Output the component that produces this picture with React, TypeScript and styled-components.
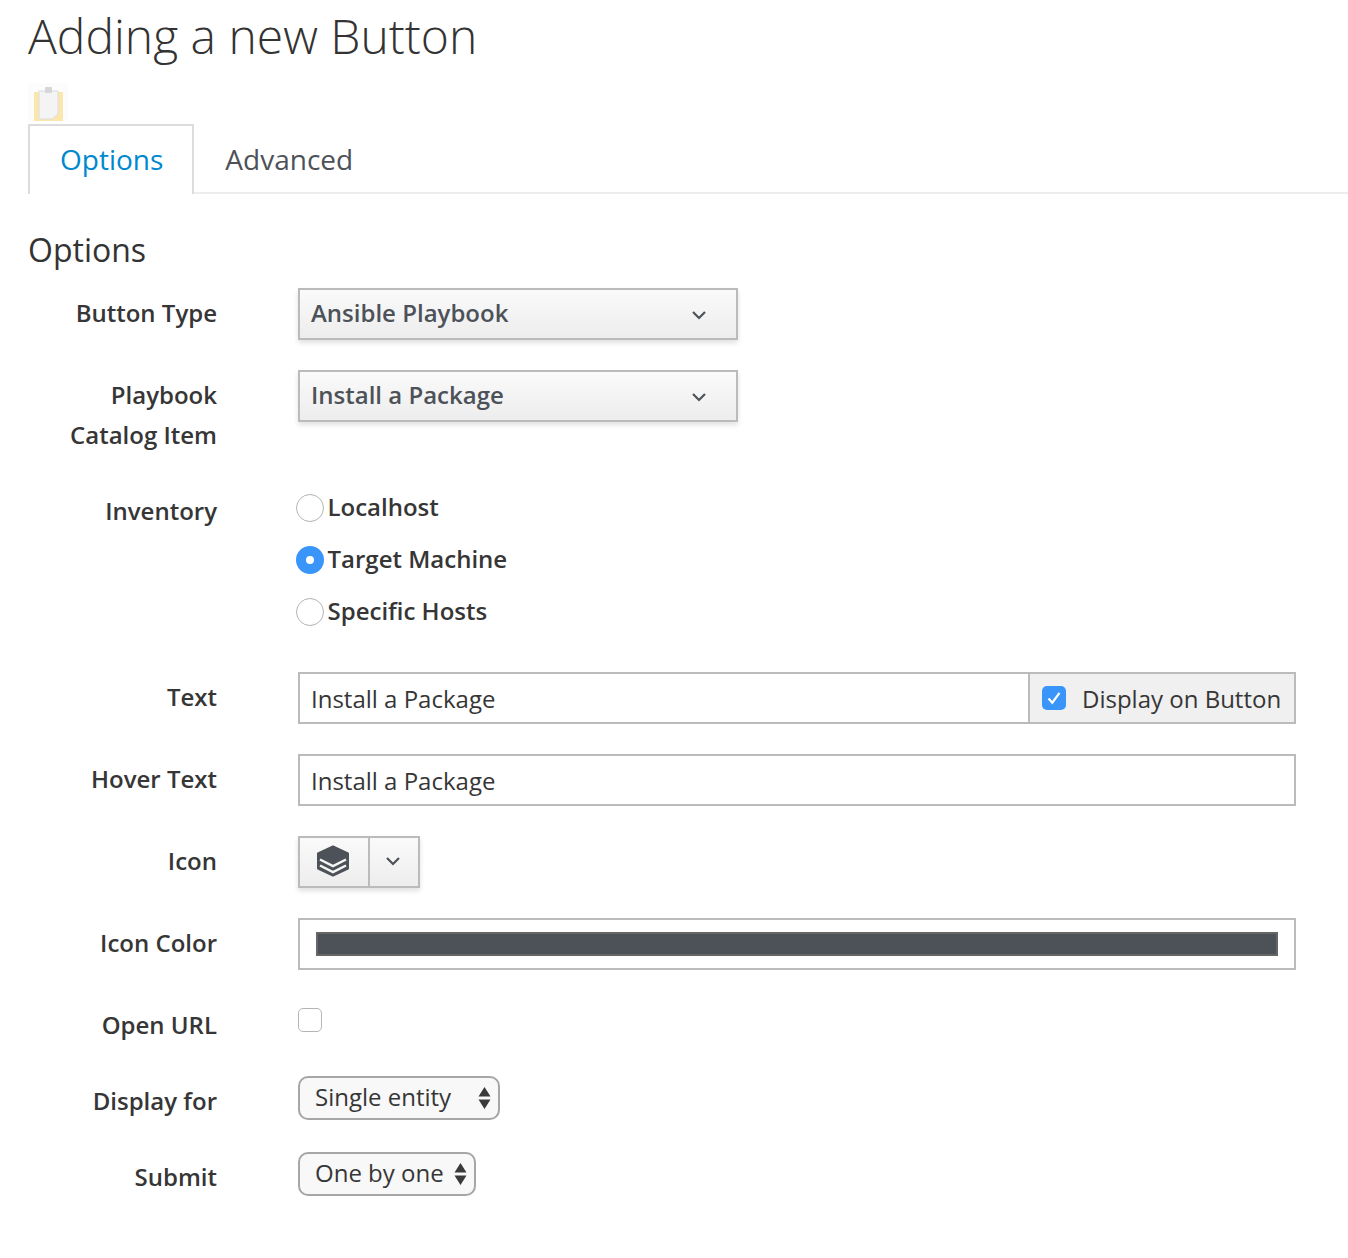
import React from "react";
import styled, { createGlobalStyle } from "styled-components";

const GlobalStyle = createGlobalStyle`
  html, body {
    margin: 0;
    padding: 0;
    background: #fff;
  }
  body {
    font-family: "Open Sans", "Liberation Sans", sans-serif;
    color: #363636;
  }
`;

const Page = styled.div`
  height: 1258px;
  padding-left: 28px;
  overflow: hidden;
`;

const Title = styled.h1`
  margin: 0;
  height: 78px;
  font-size: 48px;
  font-weight: 300;
  line-height: 71px;
  color: #333;
  white-space: nowrap;
`;

const IconSlot = styled.div`
  height: 46px;
  box-sizing: border-box;
  padding-top: 5px;
`;

const TabBar = styled.div`
  display: flex;
  height: 70px;
  border-bottom: 2px solid #ededed;
  box-sizing: border-box;
`;

const Tab = styled.div<{ $active?: boolean }>`
  height: ${(p) => (p.$active ? 70 : 68)}px;
  box-sizing: border-box;
  padding: 0 29px ${(p) => (p.$active ? 2 : 0)}px ${(p) => (p.$active ? 30 : 29)}px;
  display: flex;
  align-items: center;
  font-size: 28px;
  color: ${(p) => (p.$active ? "#0088ce" : "#4d5258")};
  background: ${(p) => (p.$active ? "#fff" : "transparent")};
  border: 2px solid ${(p) => (p.$active ? "#dcdcdc" : "transparent")};
  border-bottom: none;
`;

const SectionTitle = styled.h3`
  margin: 0;
  padding-top: 35px;
  height: 94px;
  box-sizing: border-box;
  font-size: 32px;
  font-weight: 400;
  line-height: 42px;
  color: #333;
`;

const Row = styled.div<{ $after: number }>`
  display: grid;
  grid-template-columns: 189px 1fr;
  column-gap: 81px;
  margin-right: 52px;
  margin-bottom: ${(p) => p.$after}px;
`;

const Label = styled.label<{ $top?: number }>`
  display: block;
  padding-top: ${(p) => p.$top ?? 5}px;
  text-align: right;
  font-size: 24px;
  font-weight: 600;
  line-height: 40px;
  color: #363636;
`;

const Dropdown = styled.div`
  width: 440px;
  height: 52px;
  box-sizing: border-box;
  padding: 0 29px 0 11px;
  display: flex;
  align-items: center;
  justify-content: space-between;
  border: 2px solid #bbb;
  background: linear-gradient(#fafafa, #ededed);
  box-shadow: 0 3px 5px rgba(3, 3, 3, 0.12);
  font-size: 24px;
  font-weight: 600;
  color: #4d5258;
`;

const DropdownText = styled.span`
  margin-bottom: 4px;
`;

const DropdownCaret = styled.span`
  display: flex;
  margin-top: 2px;
`;

const RadioList = styled.div`
  margin-left: -2px;
`;

const RadioRow = styled.div`
  height: 52px;
  display: flex;
  align-items: center;
  font-size: 24px;
  font-weight: 600;
  color: #363636;
`;

const RadioText = styled.span`
  margin-bottom: 4px;
`;

const RadioDot = styled.span<{ $checked?: boolean }>`
  width: 28px;
  height: 28px;
  box-sizing: border-box;
  flex: none;
  border-radius: 50%;
  border: ${(p) => (p.$checked ? "10px solid #3a95fb" : "1px solid #b5b5b5")};
  background: #fff;
  margin-right: 3.5px;
`;

const InputGroup = styled.div`
  height: 52px;
  box-sizing: border-box;
  display: flex;
  border: 2px solid #bbb;
  background: #fff;
`;

const TextField = styled.input`
  flex: 1;
  min-width: 0;
  border: none;
  outline: none;
  padding: 0 11px;
  background: transparent;
  font-family: inherit;
  font-size: 24px;
  color: #363636;
`;

const Addon = styled.div`
  width: 266px;
  box-sizing: border-box;
  display: flex;
  align-items: center;
  padding-left: 12px;
  border-left: 2px solid #bbb;
  background: #f0f0f0;
  font-size: 24px;
  color: #363636;
`;

const CheckMark = styled.span`
  width: 24px;
  height: 24px;
  flex: none;
  display: flex;
  align-items: center;
  justify-content: center;
  border-radius: 5px;
  background: #3a95fb;
  margin-right: 16px;
`;

const IconPicker = styled.div`
  width: 122px;
  height: 52px;
  box-sizing: border-box;
  display: flex;
  border: 2px solid #bbb;
  background: linear-gradient(#fafafa, #ededed);
  box-shadow: 0 3px 5px rgba(3, 3, 3, 0.12);
`;

const IconPickerMain = styled.div`
  width: 70px;
  box-sizing: border-box;
  padding: 0 2px 3px 0;
  display: flex;
  align-items: center;
  justify-content: center;
  border-right: 2px solid #bbb;
`;

const IconPickerCaret = styled.div`
  flex: 1;
  padding: 0 2px 2px 0;
  display: flex;
  align-items: center;
  justify-content: center;
`;

const ColorField = styled.div`
  height: 52px;
  box-sizing: border-box;
  padding: 12px 16px;
  border: 2px solid #bbb;
  background: #fff;
`;

const ColorSwatch = styled.div`
  height: 24px;
  box-sizing: border-box;
  border: 2px solid #666;
  background: #4d5258;
`;

const PlainCheck = styled.span`
  display: block;
  width: 24px;
  height: 24px;
  margin-top: 8px;
  box-sizing: border-box;
  border: 1px solid #b5b5b5;
  border-radius: 5px;
  background: #fff;
`;

const NativeSelect = styled.div<{ $width: number }>`
  width: ${(p) => p.$width}px;
  height: 44px;
  box-sizing: border-box;
  padding: 0 7px 0 15px;
  display: flex;
  align-items: center;
  justify-content: space-between;
  border: 2px solid #a6a6a6;
  border-radius: 10px;
  background: #f8f8f8;
  font-size: 24px;
  color: #363636;
`;

const SelectText = styled.span`
  margin-bottom: 3px;
`;

const ClipboardSvg = styled.svg`
  display: block;
  filter: blur(0.6px);
`;

const Chevron = () => (
  <svg width="16" height="16" viewBox="0 0 16 16" fill="none">
    <path d="M2 5l6 6 6-6" stroke="#4d5258" strokeWidth="2.2" />
  </svg>
);

const Arrows = () => (
  <svg width="13" height="24" viewBox="0 0 13 24">
    <path d="M6.5 1L12.5 10.5H.5z M.5 13.5H12.5L6.5 23z" fill="#3a3a3a" />
  </svg>
);

// clipboard placeholder, washed out like the source image
const ClipboardIcon = () => (
  <ClipboardSvg width="40" height="40" viewBox="0 0 40 40">
    <rect x="0" y="0" width="40" height="38" fill="#fcfcfc" />
    <rect x="6" y="9" width="29" height="29" fill="#fbe7ac" />
    <path d="M11 8h19v23l-6 5H11z" fill="#f4f4f4" stroke="#dcdcdc" />
    <rect x="17" y="4" width="7" height="6" rx="1" fill="#d6d6d6" />
  </ClipboardSvg>
);

const BundleIcon = () => (
  <svg width="34" height="34" viewBox="0 0 34 34">
    <path
      d="M17 2.500L32 9.500v15L17 31.500 2 24.500V9.500z"
      fill="#4d5258"
      stroke="#4d5258"
      strokeWidth="2"
      strokeLinejoin="round"
    />
    <path d="M4 15.500l13 6.500 13-6.500M4 21.500l13 6.500 13-6.500" fill="none" stroke="#f6f6f6" strokeWidth="2.500" />
  </svg>
);

const Check = () => (
  <svg width="16" height="16" viewBox="0 0 16 16" fill="none">
    <path d="M2.500 8.500l3.800 4.200L13.500 2.800" stroke="#fff" strokeWidth="2.2" />
  </svg>
);

const ChoiceDropdown = ({ value }: { value: string }) => (
  <Dropdown>
    <DropdownText>{value}</DropdownText>
    <DropdownCaret>
      <Chevron />
    </DropdownCaret>
  </Dropdown>
);

const Radio = ({ text, checked }: { text: string; checked?: boolean }) => (
  <RadioRow>
    <RadioDot $checked={checked} />
    <RadioText>{text}</RadioText>
  </RadioRow>
);

export default function App() {
  return (
    <Page>
      <GlobalStyle />
      <Title>Adding a new Button</Title>
      <IconSlot>
        <ClipboardIcon />
      </IconSlot>
      <TabBar>
        <Tab $active>Options</Tab>
        <Tab>Advanced</Tab>
      </TabBar>
      <SectionTitle>Options</SectionTitle>

      <Row $after={30}>
        <Label>Button Type</Label>
        <ChoiceDropdown value="Ansible Playbook" />
      </Row>

      <Row $after={27}>
        <Label>
          Playbook
          <br />
          Catalog Item
        </Label>
        <ChoiceDropdown value="Install a Package" />
      </Row>

      <Row $after={34}>
        <Label $top={9}>Inventory</Label>
        <RadioList>
          <Radio text="Localhost" />
          <Radio text="Target Machine" checked />
          <Radio text="Specific Hosts" />
        </RadioList>
      </Row>

      <Row $after={30}>
        <Label>Text</Label>
        <InputGroup>
          <TextField defaultValue="Install a Package" />
          <Addon>
            <CheckMark>
              <Check />
            </CheckMark>
            Display on Button
          </Addon>
        </InputGroup>
      </Row>

      <Row $after={30}>
        <Label>Hover Text</Label>
        <InputGroup>
          <TextField defaultValue="Install a Package" />
        </InputGroup>
      </Row>

      <Row $after={30}>
        <Label>Icon</Label>
        <IconPicker>
          <IconPickerMain>
            <BundleIcon />
          </IconPickerMain>
          <IconPickerCaret>
            <Chevron />
          </IconPickerCaret>
        </IconPicker>
      </Row>

      <Row $after={30}>
        <Label>Icon Color</Label>
        <ColorField>
          <ColorSwatch />
        </ColorField>
      </Row>

      <Row $after={31}>
        <Label>Open URL</Label>
        <PlainCheck />
      </Row>

      <Row $after={31}>
        <Label>Display for</Label>
        <NativeSelect $width={202}>
          <SelectText>Single entity</SelectText>
          <Arrows />
        </NativeSelect>
      </Row>

      <Row $after={0}>
        <Label>Submit</Label>
        <NativeSelect $width={178}>
          <SelectText>One by one</SelectText>
          <Arrows />
        </NativeSelect>
      </Row>
    </Page>
  );
}
